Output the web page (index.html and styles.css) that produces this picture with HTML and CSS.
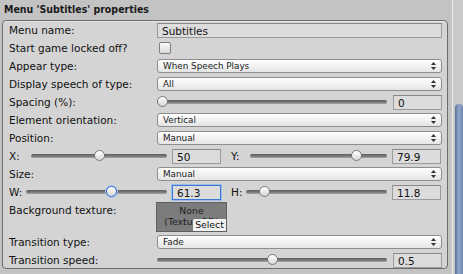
FILE: index.html
```html
<!DOCTYPE html>
<html lang="en">
<head>
    <meta charset="UTF-8">
    <title>Menu 'Subtitles' properties</title>
    <link rel="stylesheet" href="styles.css">
</head>
<body>
    <div class="inspector">
        <div class="main">
            <div class="title">Menu 'Subtitles' properties</div>
            <div class="box">
                <div class="row">
                    <span class="label">Menu name:</span>
                    <div class="field text">Subtitles</div>
                </div>
                <div class="row">
                    <span class="label">Start game locked off?</span>
                    <div><span class="checkbox"></span></div>
                </div>
                <div class="row">
                    <span class="label">Appear type:</span>
                    <div class="popup">When Speech Plays<svg class="arrows" width="5" height="8" viewBox="0 0 5 8"><path d="M2.5 0 L5 3 L0 3 Z M2.5 8 L5 5 L0 5 Z" fill="#333"/></svg></div>
                </div>
                <div class="row">
                    <span class="label">Display speech of type:</span>
                    <div class="popup">All<svg class="arrows" width="5" height="8" viewBox="0 0 5 8"><path d="M2.5 0 L5 3 L0 3 Z M2.5 8 L5 5 L0 5 Z" fill="#333"/></svg></div>
                </div>
                <div class="row">
                    <span class="label">Spacing (%):</span>
                    <div class="slider-group">
                        <div class="slider"><span class="thumb" style="--v: 0"></span></div>
                        <div class="field num">0</div>
                    </div>
                </div>
                <div class="row">
                    <span class="label">Element orientation:</span>
                    <div class="popup">Vertical<svg class="arrows" width="5" height="8" viewBox="0 0 5 8"><path d="M2.5 0 L5 3 L0 3 Z M2.5 8 L5 5 L0 5 Z" fill="#333"/></svg></div>
                </div>
                <div class="row">
                    <span class="label">Position:</span>
                    <div class="popup">Manual<svg class="arrows" width="5" height="8" viewBox="0 0 5 8"><path d="M2.5 0 L5 3 L0 3 Z M2.5 8 L5 5 L0 5 Z" fill="#333"/></svg></div>
                </div>
                <div class="row pair">
                    <div class="half">
                        <span class="short x">X:</span>
                        <div class="slider"><span class="thumb" style="--v: 0.5"></span></div>
                        <div class="field num">50</div>
                    </div>
                    <div class="half">
                        <span class="short y">Y:</span>
                        <div class="slider"><span class="thumb" style="--v: 0.799"></span></div>
                        <div class="field num">79.9</div>
                    </div>
                </div>
                <div class="row">
                    <span class="label">Size:</span>
                    <div class="popup">Manual<svg class="arrows" width="5" height="8" viewBox="0 0 5 8"><path d="M2.5 0 L5 3 L0 3 Z M2.5 8 L5 5 L0 5 Z" fill="#333"/></svg></div>
                </div>
                <div class="row pair">
                    <div class="half">
                        <span class="short w">W:</span>
                        <div class="slider"><span class="thumb focus" style="--v: 0.613"></span></div>
                        <div class="field num focus">61.3</div>
                    </div>
                    <div class="half">
                        <span class="short h">H:</span>
                        <div class="slider"><span class="thumb" style="--v: 0.1"></span></div>
                        <div class="field num">11.8</div>
                    </div>
                </div>
                <div class="row tall">
                    <span class="label">Background texture:</span>
                    <div>
                        <div class="texture">
                            <span>None</span>
                            <span>(Texture2D)</span>
                            <span class="select">Select</span>
                        </div>
                    </div>
                </div>
                <div class="row">
                    <span class="label">Transition type:</span>
                    <div class="popup">Fade<svg class="arrows" width="5" height="8" viewBox="0 0 5 8"><path d="M2.5 0 L5 3 L0 3 Z M2.5 8 L5 5 L0 5 Z" fill="#333"/></svg></div>
                </div>
                <div class="row">
                    <span class="label">Transition speed:</span>
                    <div class="slider-group">
                        <div class="slider"><span class="thumb" style="--v: 0.5"></span></div>
                        <div class="field num">0.5</div>
                    </div>
                </div>
            </div>
        </div>
        <div class="scrollbar"><div class="scroll-thumb"></div></div>
    </div>
</body>
</html>
```

FILE: styles.css
```css
body {
    margin: 0;
    padding: 0;
    font-family: "DejaVu Sans", sans-serif;
    font-size: 10.5px;
    color: #111;
    background-color: #c3c3c3;
    overflow: hidden;
}
.inspector {
    display: flex;
    width: 463px;
    height: 274px;
}
.main {
    width: 452px;
}
.title {
    height: 20px;
    line-height: 19px;
    padding-left: 4px;
    font-family: "DejaVu Sans Condensed", "DejaVu Sans", sans-serif;
    font-weight: bold;
    font-size: 10.5px;
    color: #1a1a1a;
}
.box {
    margin-left: 2px;
    width: 446px;
    height: 249px;
    box-sizing: border-box;
    border: 1px solid #6c6c6c;
    border-radius: 4px;
    background-color: #d4d4d4;
    padding: 0 5px 0 6px;
    box-shadow: inset 0 1px 0 #e6e6e6;
}
.row {
    display: grid;
    grid-template-columns: 148px 1fr;
    height: 18px;
    align-items: center;
}
.row.tall {
    height: 32px;
    align-items: start;
}
.row.tall .label {
    margin-top: 3px;
}
.row.pair {
    display: flex;
    gap: 10px;
}
.label {
    white-space: nowrap;
}
.field {
    height: 15px;
    line-height: 14px;
    box-sizing: border-box;
    border: 1px solid #9b9b9b;
    border-top-color: #878787;
    background-color: #dcdcdc;
    padding-left: 4px;
    font-size: 10.5px;
}
.field.focus {
    border: 1px solid #3a78d8;
    box-shadow: 0 0 0 1px #9ebce8;
}
.checkbox {
    display: block;
    margin-left: 2px;
    width: 10px;
    height: 10px;
    border: 1px solid #7c7c7c;
    border-radius: 2px;
    background: linear-gradient(#fbfbfb, #d9d9d9);
}
.popup {
    display: flex;
    align-items: center;
    justify-content: space-between;
    height: 14px;
    box-sizing: border-box;
    border: 1px solid #8e8e8e;
    border-radius: 3px;
    background: linear-gradient(#ffffff, #e4e4e4);
    padding: 0 5px;
    font-size: 8.8px;
    color: #1a1a1a;
}
.slider-group {
    display: flex;
    align-items: center;
    gap: 6px;
}
.slider-group .field {
    width: 49px;
}
.slider {
    position: relative;
    flex: 1;
    height: 12px;
}
.slider::before {
    content: "";
    position: absolute;
    left: 0;
    right: 0;
    top: 4px;
    height: 4px;
    border-radius: 2px;
    background: linear-gradient(#5c5c5c, #7e7e7e 60%, #a5a5a5);
}
.thumb {
    position: absolute;
    top: 0;
    left: calc(var(--v) * (100% - 11px));
    width: 11px;
    height: 11px;
    box-sizing: border-box;
    border: 1px solid #7a7a7a;
    border-radius: 50%;
    background: linear-gradient(#ffffff, #d6d6d6);
}
.thumb.focus {
    border: 1px solid #2f6fd3;
    box-shadow: 0 0 0 1px #9ebce8;
}
.half {
    display: flex;
    align-items: center;
    width: 212px;
}
.half:last-child {
    width: 210px;
}
.half .slider {
    margin-right: 5px;
}
.half .field {
    width: 49px;
}
.short.x { width: 22px; }
.short.y { width: 19px; }
.short.w { width: 17px; }
.short.h { width: 15px; }
.texture {
    position: relative;
    margin-left: -1px;
    margin-top: 1px;
    width: 71px;
    height: 30px;
    box-sizing: border-box;
    border: 1px solid #5f5f5f;
    background-color: #7c7c7c;
    display: flex;
    flex-direction: column;
    align-items: center;
    font-size: 9.3px;
    line-height: 11px;
    padding-top: 2px;
    color: #1c1c1c;
    overflow: hidden;
}
.select {
    position: absolute;
    right: 0;
    bottom: 0;
    width: 33px;
    height: 12px;
    line-height: 12px;
    background-color: #f1f1f1;
    border-top-left-radius: 2px;
    text-align: center;
    color: #111;
}
.scrollbar {
    width: 11px;
    height: 274px;
    box-sizing: border-box;
    border-left: 1px solid #ececec;
    background-color: #c9c9c9;
    padding-top: 104px;
    padding-left: 2px;
}
.scroll-thumb {
    height: 170px;
    border-radius: 5px 5px 0 0;
    background: linear-gradient(to right, #56709a, #8ea5c6 45%, #7f97bb 80%, #6680a8);
}
```
